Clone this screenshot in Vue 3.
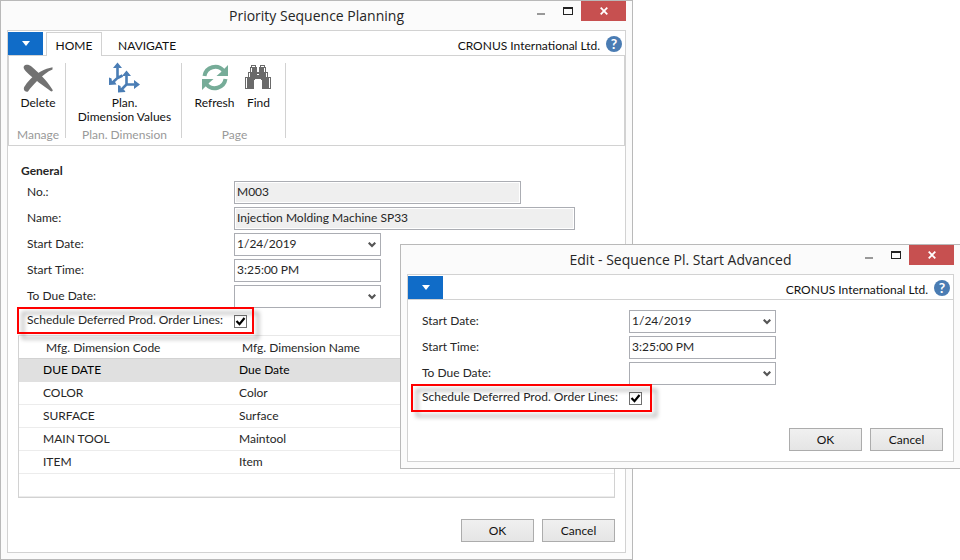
<script setup>
import { reactive } from 'vue'

const plan = reactive({ no: 'M003', name: 'Injection Molding Machine SP33', date: '1/24/2019', time: '3:25:00 PM', due: '', deferred: true })
const advanced = reactive({ date: '1/24/2019', time: '3:25:00 PM', due: '', deferred: true })

const dimensions = [
  { code: 'DUE DATE', name: 'Due Date' },
  { code: 'COLOR', name: 'Color' },
  { code: 'SURFACE', name: 'Surface' },
  { code: 'MAIN TOOL', name: 'Maintool' },
  { code: 'ITEM', name: 'Item' },
]
const windows = [
  { id: 'main', title: 'Priority Sequence Planning', model: plan },
  { id: 'dialog', title: 'Edit - Sequence Pl. Start Advanced', model: advanced },
]
</script>

<template>
  <div class="desk">
    <section v-for="w in windows" :key="w.id" class="window" :class="w.id" :aria-labelledby="w.id + '-title'">
      <header class="titlebar">
        <h1 :id="w.id + '-title'">{{ w.title }}</h1>
        <div class="controls">
          <button type="button" aria-label="Minimize">
            <svg width="8" height="20" viewBox="0 0 8 20"><path d="M0 12h8v2H0z" fill="#999" /></svg>
          </button>
          <button type="button" aria-label="Maximize">
            <svg width="10" height="20" viewBox="0 0 10 20"><path d="M0 6h10v8H0zM1 8v5h8V8z" fill="#222" fill-rule="evenodd" /></svg>
          </button>
          <button type="button" class="close" aria-label="Close">
            <svg width="8" height="8" viewBox="0 0 8 8"><path d="M.7.7l6.6 6.6M7.3.7L.7 7.3" stroke="#fff" stroke-width="1.8" /></svg>
          </button>
        </div>
      </header>

      <div class="frame">
        <nav class="bar">
          <button type="button" class="app" aria-label="Application menu">
            <svg width="8" height="5" viewBox="0 0 8 5"><path d="M0 0h8L4 5z" fill="#fff" /></svg>
          </button>
          <template v-if="w.id === 'main'">
            <button type="button" class="tab active">HOME</button>
            <button type="button" class="tab">NAVIGATE</button>
          </template>
          <span class="company">CRONUS International Ltd.</span>
          <button type="button" class="help" aria-label="Help">?</button>
        </nav>

        <div v-if="w.id === 'main'" class="ribbon">
          <div class="group manage">
            <div class="items">
              <button type="button" class="tool">
                <svg width="32" height="32" viewBox="0 0 32 32" fill="#727272">
                  <path d="M2 4C3.500 2 7 2.200 9.500 4.500C16 10 25 18.500 30.700 28C31 29.200 29.500 30 28.500 29C22 24 12 17.500 4 9.500C2 7.500 1 5.500 2 4z" />
                  <path d="M30.500 5.200C23 6.500 14 11.500 8.500 17C5 20.500 3.500 23 2.200 25C1 27.500 3 30.500 6 29.500C8.500 26 11.500 22.500 15.500 18.500C20.500 13.500 25.500 9.500 30.500 7.500z" />
                </svg>
                <span>Delete</span>
              </button>
            </div>
            <span class="caption">Manage</span>
          </div>
          <div class="group dimension">
            <div class="items">
              <button type="button" class="tool">
                <svg width="32" height="32" viewBox="0 0 32 32">
                  <path d="M9.500 4v12L4 21M9.500 16l5-2.500M18.500 12v10.500L13 28M18.500 22.500H29" fill="none" stroke="#4a7db5" stroke-width="2.600" />
                  <path d="M9.500.500l4.500 5.500h-3l-1.500-1-1.500 1H5zM18.500 8.500l4.500 5.500h-3l-1.500-1-1.500 1h-3zM32 22.500l-6 4.500v-3l1-1.500-1-1.500v-3zM1 15.500l2.500 1 .500 3 3 .500 1.500 2.500-7.500.500zM10 23l2.500 1 .500 3 3 .500 1.500 2.500-7.500.500z" fill="#4a7db5" />
                </svg>
                <span>Plan.<br>Dimension Values</span>
              </button>
            </div>
            <span class="caption">Plan. Dimension</span>
          </div>
          <div class="group page">
            <div class="items">
              <button type="button" class="tool">
                <svg width="32" height="32" viewBox="0 0 32 32">
                  <path d="M5.500 14A10.800 10.800 0 0 1 24.500 8.800" fill="none" stroke="#76ac98" stroke-width="4" />
                  <path d="M29 3v11H17.500l4-3.500z" fill="#76ac98" />
                  <path d="M26.500 17A10.800 10.800 0 0 1 7.500 22.200" fill="none" stroke="#76ac98" stroke-width="4" />
                  <path d="M3 28V17h11.500l-4 3.500z" fill="#76ac98" />
                </svg>
                <span>Refresh</span>
              </button>
              <button type="button" class="tool">
                <svg width="32" height="32" viewBox="0 0 32 32" fill="#6a6a6a">
                  <path d="M9 3h5v2h1v5h2V5h1V3h5v2h1v5h2v5h3v12h-9v-9h-1v-1h-6v1h-1v9H3V15h3v-5h2V5h1z" />
                  <path d="M10 4h3v1h-3zM19 4h3v1h-3zM9 6h1v4H9zM7 11h1v4H7zM4 16h1v10H4zM22 6h1v4h-1zM24 11h1v4h-1zM27 16h1v10h-1zM15 12h2v1h-2z" fill="#fff" />
                </svg>
                <span>Find</span>
              </button>
            </div>
            <span class="caption">Page</span>
          </div>
        </div>

        <form class="body" @submit.prevent>
          <h2 v-if="w.id === 'main'">General</h2>
          <div class="fields">
            <template v-if="w.id === 'main'">
              <div class="field">
                <label for="main-no">No.:</label>
                <input id="main-no" class="box medium" readonly :value="w.model.no">
              </div>
              <div class="field">
                <label for="main-name">Name:</label>
                <input id="main-name" class="box long" readonly :value="w.model.name">
              </div>
            </template>
            <div class="field">
              <label :for="w.id + '-date'">Start Date:</label>
              <span class="drop">
                <select :id="w.id + '-date'" v-model="w.model.date" class="box"><option>1/24/2019</option></select>
                <svg width="8" height="6" viewBox="0 0 8 6"><path d="M.7 .7L4 4l3.300-3.300" fill="none" stroke="#555" stroke-width="2.200" /></svg>
              </span>
            </div>
            <div class="field">
              <label :for="w.id + '-time'">Start Time:</label>
              <input :id="w.id + '-time'" v-model="w.model.time" class="box">
            </div>
            <div class="field">
              <label :for="w.id + '-due'">To Due Date:</label>
              <span class="drop">
                <select :id="w.id + '-due'" v-model="w.model.due" class="box"><option value=""></option></select>
                <svg width="8" height="6" viewBox="0 0 8 6"><path d="M.7 .7L4 4l3.300-3.300" fill="none" stroke="#555" stroke-width="2.200" /></svg>
              </span>
            </div>
            <div class="field flagged">
              <label :for="w.id + '-deferred'">Schedule Deferred Prod. Order Lines:</label>
              <span class="tick">
                <input :id="w.id + '-deferred'" v-model="w.model.deferred" type="checkbox">
                <svg v-if="w.model.deferred" width="13" height="13" viewBox="0 0 13 13"><path d="M2.500 6l3 3.200L10.500 3" fill="none" stroke="#000" stroke-width="2.200" /></svg>
              </span>
            </div>
          </div>

          <table v-if="w.id === 'main'">
            <thead>
              <tr><th>Mfg. Dimension Code</th><th>Mfg. Dimension Name</th></tr>
            </thead>
            <tbody>
              <tr v-for="(d, i) in dimensions" :key="d.code" :class="{ selected: i === 0 }">
                <td>{{ d.code }}</td><td>{{ d.name }}</td>
              </tr>
              <tr><td></td><td></td></tr>
            </tbody>
          </table>

          <footer class="actions">
            <button type="submit">OK</button>
            <button type="button">Cancel</button>
          </footer>
        </form>
      </div>
    </section>
  </div>
</template>

<style>
body { margin: 0; background: #fff; }
</style>

<style scoped>
.desk {
  position: relative;
  min-height: 100vh;
  overflow: hidden;
  font: 12px/16px Lato, "Open Sans", sans-serif;
  color: #262626;
}
* { box-sizing: border-box; }
button, input, select { font: inherit; color: inherit; margin: 0; padding: 0; border: 0; background: none; border-radius: 0; }
svg { display: block; flex: none; }
h1, h2 { margin: 0; }

.window { border: 1px solid #b9b9b9; padding: 0 6px 6px; background: #fbfbfb; }
.main { width: calc(100% - 327px); }
.dialog { position: absolute; top: 244px; left: 400px; right: 0; border-right: 0; }

.titlebar { display: grid; height: 29px; }
.titlebar > * { grid-area: 1 / 1; }
.titlebar h1 { justify-self: center; align-self: center; font: 14px/20px "Open Sans", sans-serif; white-space: nowrap; }
.controls { justify-self: end; display: flex; align-items: flex-start; }
.controls button { display: flex; justify-content: center; width: 27px; height: 20px; }
.controls .close { align-items: center; width: 45px; background: #c75050; }

.frame { border: 1px solid #d2d2d2; background: #fff; }
.bar { display: flex; height: 25px; padding-top: 1px; border-bottom: 1px solid #d2d2d2; color: #111; }
.app { display: flex; align-items: center; justify-content: center; width: 35px; height: 23px; background: #106cc8; }
.tab { height: 24px; padding: 3px 16px 0; }
.tab.active { width: 56px; margin-left: 3px; padding: 2px 0 0; border: 1px solid #d2d2d2; border-bottom: 0; background: #fff; }
.company { margin-left: auto; padding-top: 6px; }
.help { width: 16px; height: 16px; margin: 4px 3px 0 6px; border-radius: 50%; background: #4a7cb3; color: #fff; font-size: 14px; line-height: 16px; font-weight: 700; text-align: center; }

.ribbon { display: flex; height: 90px; padding: 7px 0; border: solid #d2d2d2; border-width: 0 1px 1px; color: #111; }
.group { display: flex; flex-direction: column; align-items: center; height: 75px; padding-left: 2px; border-right: 1px solid #d2d2d2; white-space: nowrap; }
.manage { width: 57px; }
.dimension { width: 116px; }
.page { width: 104px; }
.items { display: flex; flex: none; gap: 8px; height: 64px; }
.tool { display: flex; flex-direction: column; align-items: center; gap: 2px; line-height: 14px; min-width: 32px; }
.tool svg { margin-top: -1px; }
.caption { color: #999; }

.body { padding: 10px; }
.main .body { padding-top: 17px; }
h2 { padding-left: 3px; margin-bottom: 2px; font-size: 12px; line-height: 16px; font-weight: 700; }
.fields { display: grid; gap: 3px; justify-items: start; padding-left: 4px; }
.main .fields { padding-left: 9px; }
.field { display: flex; align-items: center; }
.field label { width: 207px; padding-bottom: 2px; white-space: nowrap; }
.box { display: block; width: 147px; height: 23px; padding: 0 2px 2px; border: 1px solid #abadb3; background: #fff; appearance: none; outline: 0; }
.box[readonly] { background: #efefef; box-shadow: inset 0 0 0 1px #fff; }
.medium { width: 287px; }
.long { width: 341px; }
.drop { display: grid; align-items: center; }
.drop > * { grid-area: 1 / 1; }
.drop svg { justify-self: end; margin-right: 5px; pointer-events: none; }
.tick { display: grid; }
.tick > * { grid-area: 1 / 1; pointer-events: none; }
.tick input { width: 13px; height: 13px; border: 1px solid #707070; background: #fff; appearance: none; pointer-events: auto; }
.flagged { position: relative; height: 20px; }
.flagged::after {
  content: "";
  position: absolute;
  inset: -4px -10px -4px -11px;
  border: 2px solid #ff0000;
  filter: drop-shadow(5px 5px 2px rgba(0, 0, 0, .35));
  pointer-events: none;
}
.main .flagged::after { inset: -4px -7px -3px -10px; }

table { width: 100%; margin-top: 4px; border-collapse: separate; border-spacing: 0; table-layout: fixed; border: 1px solid #d2d2d2; border-top-color: #e8e8e8; }
th, td { height: 23px; padding: 0 4px; border-bottom: 1px solid #ececec; text-align: left; font-weight: 400; line-height: 16px; }
th { padding: 2px 7px 0; border-color: #d2d2d2; }
th:first-child { width: 216px; padding-left: 27px; }
td:first-child { padding-left: 24px; }
.selected td { background: #e0e0e0; border-color: #e0e0e0; color: #000; }

.actions { display: flex; justify-content: flex-end; gap: 8px; margin-top: 20px; }
.main .actions { margin-top: 21px; }
.actions button { width: 73px; height: 23px; border: 1px solid #acacac; background: linear-gradient(#f0f0f0, #e5e5e5); color: #111; }
</style>
